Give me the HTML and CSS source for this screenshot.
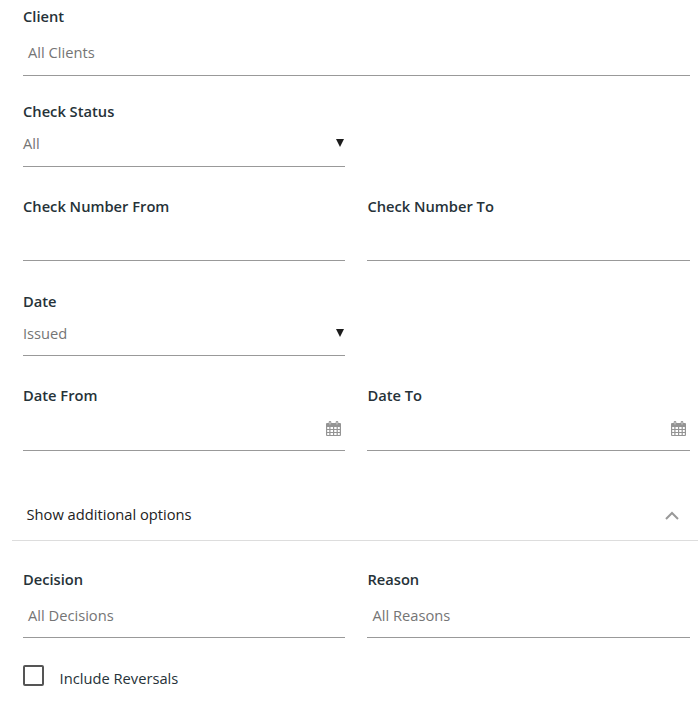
FILE: index.html
```html
<!DOCTYPE html>
<html lang="en">
<head>
<meta charset="utf-8">
<title>Check search</title>
<link rel="stylesheet" href="styles.css">
</head>
<body>
<svg class="defs" aria-hidden="true">
  <symbol id="calendar" viewBox="0 0 15 15">
    <path fill-rule="evenodd" d="M1 2h1.700V1q0-1 1.300-1t1.300 1v1h4.400V1q0-1 1.300-1t1.300 1v1H14q1 0 1 1v11q0 1-1 1H1q-1 0-1-1V3q0-1 1-1zM1.200 6v2h2.100V6zM4.500 6v2H7V6zM8.200 6v2h2.400V6zM11.800 6v2h2V6zM1.200 9v2h2.100V9zM4.500 9v2H7V9zM8.200 9v2h2.400V9zM11.800 9v2h2V9zM1.200 12v2h2.100v-2zM4.500 12v2H7v-2zM8.200 12v2h2.400v-2zM11.800 12v2h2v-2zM3.700 1v2.500h.6V1zM10.700 1v2.500h.6V1z"/>
  </symbol>
</svg>
<form class="search">
  <div class="row client"><div class="field"><span class="label">Client</span><div class="control multi">All Clients</div></div></div>
  <div class="row status"><div class="field"><span class="label">Check Status</span><div class="control">All<svg class="arrow" viewBox="0 0 8 8"><path d="M0 0h8L4 8z"/></svg></div></div></div>
  <div class="row number"><div class="field"><span class="label">Check Number From</span><div class="control"></div></div><div class="field"><span class="label">Check Number To</span><div class="control"></div></div></div>
  <div class="row date"><div class="field"><span class="label">Date</span><div class="control">Issued<svg class="arrow" viewBox="0 0 8 8"><path d="M0 0h8L4 8z"/></svg></div></div></div>
  <div class="row range"><div class="field"><span class="label">Date From</span><div class="control"><svg class="calendar"><use href="#calendar"/></svg></div></div><div class="field"><span class="label">Date To</span><div class="control"><svg class="calendar"><use href="#calendar"/></svg></div></div></div>
  <div class="toggle"><span>Show additional options</span><svg class="chevron" viewBox="0 0 14 9"><path d="M1 8l6-6 6 6"/></svg></div>
  <div class="row extra"><div class="field"><span class="label">Decision</span><div class="control multi">All Decisions</div></div><div class="field"><span class="label">Reason</span><div class="control multi">All Reasons</div></div></div>
  <div class="check"><span class="box"></span><span class="caption">Include Reversals</span></div>
</form>
</body>
</html>
```
FILE: styles.css
```css
* { box-sizing: border-box; }
body { margin: 0; background: #fff; color: #263238; font: 14.7px/20px "Open Sans", sans-serif; overflow: hidden; }
.defs { display: none; }
.search { width: 698px; padding-top: 7px; }
.row { display: grid; grid-template-columns: 322px 323px; column-gap: 22.4px; margin-left: 23px; height: 95px; }
.row.client { grid-template-columns: 667px; }
.row.date { height: 94px; }
.row.range { height: 101px; }
.label { display: block; margin-bottom: 2px; font-weight: 600; line-height: 18px; }
.control { display: flex; align-items: center; height: 45px; padding-right: 4px; border-bottom: 1px solid #999; color: #757575; }
.status .control { padding-bottom: 2px; }
.number .control { height: 44px; }
.date .control { height: 44px; padding-bottom: 1px; }
.client .control { height: 49px; }
.extra .control { height: 48px; }
.control.multi { padding-left: 5px; padding-top: 2px; }
.arrow { width: 8px; height: 8px; margin: 0 -3px 0 auto; fill: #1c1c1c; }
.calendar { width: 15px; height: 15px; margin-left: auto; fill: #949494; }
.toggle { display: flex; align-items: center; justify-content: space-between; height: 54px; margin-left: 12px; padding: 0 19px 0 14.500px; border-bottom: 1px solid #ddd; color: #222; }
.chevron { width: 14px; height: 9px; margin-top: 3px; fill: none; stroke: #999; stroke-width: 2; }
.row.extra { margin-top: 29px; }
.check { display: flex; align-items: flex-start; margin-left: 23px; gap: 15.600px; }
.box { width: 21px; height: 21px; border: 2px solid #555; border-radius: 2px; }
.caption { margin-top: 3px; }
```
